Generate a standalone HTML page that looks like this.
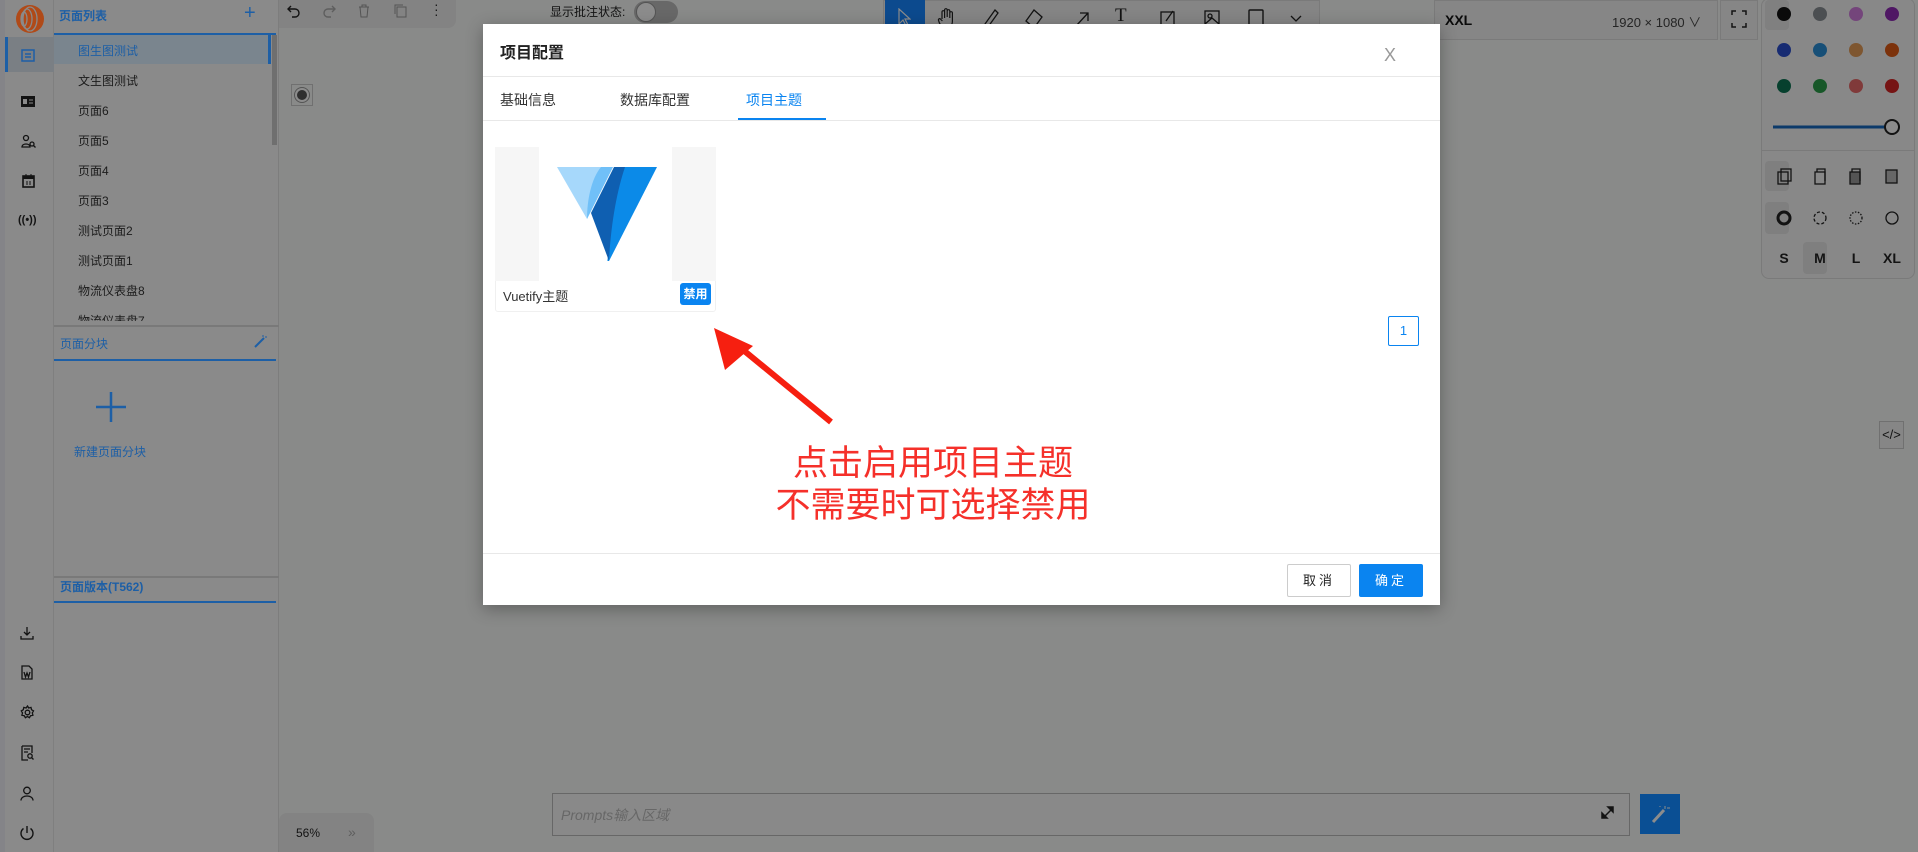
<!DOCTYPE html>
<html><head><meta charset="utf-8"><style>
*{box-sizing:border-box;margin:0;padding:0}
html,body{width:1918px;height:852px}
body{overflow:hidden;position:relative;background:#898a89;font-family:"Liberation Sans","Noto Sans CJK SC",sans-serif;font-size:13px;color:#131313}
.abs{position:absolute}
.ib{position:absolute;left:0;top:0;width:54px;height:852px;background:#8a8a8a;border-right:1px solid #7f7f7f}
.side{position:absolute;left:54px;top:0;width:225px;height:852px;background:#8a8a8a;border-right:1px solid #7d7d7d}
.item{position:absolute;left:24px;font-size:12px;color:#1c1c1c}
.blue{color:#1d5fa6}
.modal{position:absolute;left:483px;top:24px;width:957px;height:581px;background:#fff;box-shadow:0 4px 16px rgba(0,0,0,.3);z-index:6;color:#222}
svg{position:absolute}
</style></head><body>
<div class="ib"></div>
<div class="abs" style="left:0;top:0;width:5px;height:852px;background:#848488"></div>
<svg style="left:14px;top:3px" width="34" height="32" viewBox="0 0 34 32"><circle cx="16" cy="16" r="14" fill="#b04a18"/><g fill="none" stroke="#8a8a8a" stroke-width="1.3"><ellipse cx="10" cy="16" rx="3" ry="7"/><ellipse cx="13" cy="16" rx="5" ry="10"/><ellipse cx="16" cy="16" rx="7" ry="12"/></g></svg>
<div class="abs" style="left:5px;top:37px;width:49px;height:35px;background:#7a7f84;border-left:3px solid #1d5fa6"></div>
<svg style="left:21px;top:49px" width="14" height="13" viewBox="0 0 14 13"><rect x="1" y="1" width="12" height="11" fill="none" stroke="#1d5fa6" stroke-width="1.5"/><path d="M4 5h6M4 8h6" stroke="#1d5fa6" stroke-width="1.4"/></svg>
<svg style="left:21px;top:95px" width="14" height="13"><rect x="0" y="1" width="14" height="11" fill="#131313"/><rect x="2" y="4" width="4" height="5" fill="#8a8a8a"/><path d="M8 5h4M8 8h4" stroke="#8a8a8a"/></svg>
<svg style="left:21px;top:134px" width="15" height="15" fill="none" stroke="#131313" stroke-width="1.3"><circle cx="5" cy="4" r="2.5"/><path d="M1 13c0-4 8-4 8 0z"/><circle cx="11" cy="10" r="2"/><path d="M12.5 11.5l2 2"/></svg>
<svg style="left:22px;top:173px" width="13" height="15"><rect x="1" y="3" width="11" height="11" fill="none" stroke="#131313" stroke-width="1.6"/><rect x="1" y="3" width="11" height="3" fill="#131313"/><path d="M4 1v3M9 1v3M5 8v4M8 8v4" stroke="#131313"/></svg>
<div class="abs" style="left:18px;top:214px;font-size:11px;font-weight:bold;color:#131313">((•))</div>
<svg style="left:20px;top:626px" width="14" height="14" fill="none" stroke="#131313" stroke-width="1.3"><path d="M7 1v8M4 6l3 3 3-3M1 10v3h12v-3"/></svg>
<svg style="left:21px;top:665px" width="12" height="15" fill="none" stroke="#131313" stroke-width="1.3"><path d="M1 1h7l3 3v10H1z"/><path d="M3 7l1.5 5 1.5-4 1.5 4L9 7"/></svg>
<svg style="left:20px;top:705px" width="15" height="15" fill="none" stroke="#131313" stroke-width="1.3"><circle cx="7.5" cy="7.5" r="2.3"/><path d="M7.5 1l1.2 2 2.3-.6.5 2.3 2 1.2-1.2 2 .6 2.3-2.3.5-1.2 2-2-1.2-2 1.2-1.2-2-2.3-.5.6-2.3-1.2-2 2-1.2.5-2.3 2.3.6z"/></svg>
<svg style="left:21px;top:745px" width="13" height="16" fill="none" stroke="#131313" stroke-width="1.3"><path d="M1 1h10v7M1 1v14h6"/><path d="M3 4h6M3 7h4"/><circle cx="9" cy="11" r="2.2"/><path d="M10.5 12.5l2 2"/></svg>
<svg style="left:20px;top:786px" width="14" height="15" fill="none" stroke="#131313" stroke-width="1.3"><circle cx="7" cy="4.5" r="3.3"/><path d="M1 14.5c0-6 12-6 12 0"/></svg>
<svg style="left:19px;top:825px" width="16" height="16" fill="none" stroke="#131313" stroke-width="1.4"><path d="M8 1v7"/><path d="M4.5 3.5a6 6 0 1 0 7 0"/></svg>

<div class="side">
 <div class="abs blue" style="left:5px;top:7px;font-size:12px;font-weight:bold">页面列表</div>
 <div class="abs blue" style="left:190px;top:2px;font-size:20px">+</div>
 <div class="abs" style="left:0;top:33px;width:222px;height:2px;background:#1d5fa6"></div>
 <div class="abs" style="left:0;top:35px;width:217px;height:29px;background:#7a858e;border-right:3px solid #1d5fa6"></div>
 <div class="abs" style="left:218px;top:35px;width:5px;height:110px;background:#6f6f6f"></div>
 <div class="item blue" style="top:42px">图生图测试</div>
 <div class="item" style="top:72px">文生图测试</div>
 <div class="item" style="top:102px">页面6</div>
 <div class="item" style="top:132px">页面5</div>
 <div class="item" style="top:162px">页面4</div>
 <div class="item" style="top:192px">页面3</div>
 <div class="item" style="top:222px">测试页面2</div>
 <div class="item" style="top:252px">测试页面1</div>
 <div class="item" style="top:282px">物流仪表盘8</div>
 <div class="item" style="top:312px;height:9px;overflow:hidden">物流仪表盘7</div>
 <div class="abs" style="left:0;top:325px;width:225px;height:2px;background:#797979"></div>
 <div class="abs blue" style="left:6px;top:335px;font-size:12px">页面分块</div>
 <svg style="left:199px;top:334px" width="14" height="14" stroke="#1d5fa6" stroke-width="2"><path d="M2 13L11 4"/><path d="M10 1v2M12 3h2" stroke-width="1"/></svg>
 <div class="abs" style="left:0;top:359px;width:222px;height:2px;background:#1d5fa6"></div>
 <svg style="left:42px;top:392px" width="30" height="30" stroke="#1d5fa6" stroke-width="2.5"><path d="M15 0v30M0 15h30"/></svg>
 <div class="abs blue" style="left:20px;top:443px;font-size:12px">新建页面分块</div>
 <div class="abs" style="left:0;top:576px;width:225px;height:2px;background:#797979"></div>
 <div class="abs blue" style="left:6px;top:578px;font-size:12px;font-weight:bold">页面版本(T562)</div>
 <div class="abs" style="left:0;top:601px;width:222px;height:2px;background:#1d5fa6"></div>
</div>

<div class="abs" style="left:279px;top:0;width:177px;height:28px;background:#838383;border-radius:0 0 8px 0"></div>
<svg style="left:287px;top:5px" width="14" height="14" fill="none" stroke="#131313" stroke-width="1.4"><path d="M4 1L1 4l3 3"/><path d="M1 4h7a4 4 0 0 1 0 8H5"/></svg>
<svg style="left:322px;top:5px" width="14" height="14" fill="none" stroke="#5e5e5e" stroke-width="1.4"><path d="M10 1l3 3-3 3"/><path d="M13 4H6a4 4 0 0 0 0 8h3"/></svg>
<svg style="left:358px;top:4px" width="12" height="14" fill="none" stroke="#545454"><path d="M1 3h10M4 3V1h4v2M2 3l1 10h6l1-10"/></svg>
<svg style="left:394px;top:4px" width="13" height="14" fill="none" stroke="#545454"><rect x="3" y="3" width="9" height="10"/><path d="M1 10V1h8"/></svg>
<div class="abs" style="left:434px;top:2px;font-size:14px;color:#1c1c1c;line-height:5px">·<br>·<br>·</div>
<div class="abs" style="left:550px;top:3px;font-size:12px;color:#131313">显示批注状态:</div>
<div class="abs" style="left:634px;top:1px;width:44px;height:22px;border-radius:11px;background:#686868"></div>
<div class="abs" style="left:636px;top:2px;width:20px;height:20px;border-radius:10px;background:#8c8c8c;border:1px solid #545454"></div>
<div class="abs" style="left:291px;top:84px;width:22px;height:22px;border:1px solid #707070"></div>
<div class="abs" style="left:297px;top:90px;width:10px;height:10px;border-radius:5px;background:#2f2f2f;box-shadow:0 0 0 2px #8c8c8c,0 0 0 3px #545454"></div>

<div class="abs" style="left:883px;top:0;width:437px;height:40px;background:#858585;border:1px solid #7a7a7a"></div>
<div class="abs" style="left:885px;top:0;width:40px;height:38px;background:#0c4a8e;border-radius:0 0 4px 4px"></div>
<svg style="left:897px;top:8px" width="14" height="20" fill="none" stroke="#8c8c8c" stroke-width="1.2"><path d="M2 1v15l4-4 3 6 2-1-3-6h5z"/></svg>
<svg style="left:937px;top:8px" width="20" height="22" fill="none" stroke="#131313" stroke-width="1.2"><path d="M5 11V4a1.3 1.3 0 0 1 2.6 0v6M7.6 9V2a1.3 1.3 0 0 1 2.6 0v7M10.2 9V3a1.3 1.3 0 0 1 2.6 0v7M12.8 10V5a1.3 1.3 0 0 1 2.6 0v8c0 4-2 7-6 7s-5-2-7-5l-1-3a1.2 1.2 0 0 1 2-1l2 2"/></svg>
<svg style="left:983px;top:9px" width="16" height="20" fill="none" stroke="#131313" stroke-width="1.3"><path d="M12 1l3 3L5 18l-4 1 1-4z"/></svg>
<svg style="left:1025px;top:9px" width="18" height="20" fill="none" stroke="#131313" stroke-width="1.3"><path d="M9 1l8 7-8 11-8-7z"/></svg>
<svg style="left:1074px;top:11px" width="16" height="16" fill="none" stroke="#131313" stroke-width="1.3"><path d="M2 15L14 2M6 2h8v8"/></svg>
<div class="abs" style="left:1115px;top:5px;font-size:19px;color:#131313;font-family:'Liberation Serif'">T</div>
<svg style="left:1160px;top:9px" width="16" height="18" fill="none" stroke="#131313" stroke-width="1.3"><rect x="1" y="3" width="13" height="14"/><path d="M6 12l7-10"/></svg>
<svg style="left:1204px;top:9px" width="16" height="18" fill="none" stroke="#131313" stroke-width="1.3"><rect x="1" y="2" width="14" height="15"/><circle cx="6" cy="7" r="2"/><path d="M1 15l7-6 7 6"/></svg>
<svg style="left:1248px;top:9px" width="16" height="18" fill="none" stroke="#131313" stroke-width="1.4"><rect x="1" y="1" width="14" height="16" rx="1"/></svg>
<svg style="left:1290px;top:15px" width="12" height="8" fill="none" stroke="#131313" stroke-width="1.3"><path d="M1 1l5 5 5-5"/></svg>

<div class="abs" style="left:1434px;top:0;width:284px;height:40px;background:#868686;border:1px solid #7a7a7a"></div>
<div class="abs" style="left:1445px;top:12px;font-size:14px;font-weight:bold;color:#0a0a0a">XXL</div>
<div class="abs" style="left:1612px;top:12px;font-size:13px;color:#252525">1920 × 1080 ∨</div>
<div class="abs" style="left:1720px;top:0;width:38px;height:40px;background:#868686;border:1px solid #7a7a7a"></div>
<svg style="left:1731px;top:10px" width="16" height="18" fill="none" stroke="#131313" stroke-width="1.5"><path d="M1 5V1h4M11 1h4v4M1 13v4h4M11 17h4v-4"/></svg>

<div class="abs" style="left:1761px;top:-2px;width:154px;height:281px;background:#888;border:1px solid #7a7a7a;border-radius:8px"></div>
<div class="abs" style="left:1765px;top:0;width:24px;height:30px;background:#808080;border-radius:4px"></div>
<div class="abs" style="left:1765px;top:161px;width:24px;height:30px;background:#7f7f7f;border-radius:4px"></div>
<div class="abs" style="left:1765px;top:202px;width:24px;height:32px;background:#7f7f7f;border-radius:4px"></div>
<div class="abs" style="left:1803px;top:242px;width:24px;height:32px;background:#7f7f7f;border-radius:4px"></div>
<div class="abs" style="left:1761px;top:150px;width:154px;height:1px;background:#7a7a7a"></div>
<svg style="left:1761px;top:0" width="154" height="279">
 <g><circle cx="23" cy="14" r="7" fill="#0a0a0a"/><circle cx="59" cy="14" r="7" fill="#4c4f52"/><circle cx="95" cy="14" r="7" fill="#74457b"/><circle cx="131" cy="14" r="7" fill="#4f1764"/>
 <circle cx="23" cy="50" r="7" fill="#172b72"/><circle cx="59" cy="50" r="7" fill="#174f77"/><circle cx="95" cy="50" r="7" fill="#7e5630"/><circle cx="131" cy="50" r="7" fill="#7c320b"/>
 <circle cx="23" cy="86" r="7" fill="#06402e"/><circle cx="59" cy="86" r="7" fill="#175728"/><circle cx="95" cy="86" r="7" fill="#803a3a"/><circle cx="131" cy="86" r="7" fill="#761414"/></g>
 <path d="M12 127H125" stroke="#0c3a6a" stroke-width="3"/><circle cx="131" cy="127" r="7" fill="#8c8c8c" stroke="#131313" stroke-width="2"/>
 <g fill="none" stroke="#131313" stroke-width="1.3"><rect x="17" y="172" width="10" height="12"/><rect x="20" y="169" width="10" height="12"/><rect x="54" y="172" width="10" height="12"/><path d="M56 172v-3h8v12"/><rect x="89" y="172" width="10" height="12" fill="#545454"/><path d="M91 172v-3h8v12"/><rect x="125" y="170" width="11" height="13" fill="#676767"/>
 <circle cx="23" cy="218" r="6" stroke-width="3"/><circle cx="59" cy="218" r="6" stroke-dasharray="3 2"/><circle cx="95" cy="218" r="6" stroke-dasharray="1.5 1.5"/><circle cx="131" cy="218" r="6"/></g>
 <g font-size="14" font-weight="bold" fill="#131313" font-family="Liberation Sans" text-anchor="middle"><text x="23" y="263">S</text><text x="59" y="263">M</text><text x="95" y="263">L</text><text x="131" y="263">XL</text></g>
</svg>

<div class="abs" style="left:1879px;top:421px;width:25px;height:28px;border:1px solid #707070;background:#868686;font-size:13px;text-align:center;line-height:26px;color:#131313">&lt;/&gt;</div>

<div class="abs" style="left:279px;top:813px;width:95px;height:39px;background:#838383;border-radius:8px 8px 0 0"></div>
<div class="abs" style="left:296px;top:826px;font-size:12px;color:#131313">56%</div>
<div class="abs" style="left:348px;top:824px;font-size:14px;color:#5e5e5e">»</div>
<div class="abs" style="left:552px;top:793px;width:1078px;height:43px;border:1px solid #676767;background:#898989"></div>
<div class="abs" style="left:561px;top:805px;font-size:14px;font-style:italic;color:#676767">Prompts输入区域</div>
<svg style="left:1600px;top:805px" width="16" height="16" stroke="#131313" stroke-width="1.5" fill="#131313"><path d="M3 13L13 3"/><path d="M13 2v5l-5-5zM2 13V8l5 5z"/></svg>
<div class="abs" style="left:1640px;top:794px;width:40px;height:40px;background:#0a4f94"></div>
<svg style="left:1650px;top:804px" width="20" height="20" stroke="#8c8c8c" stroke-width="3"><path d="M3 18L14 6"/><path d="M15 2v3M17 4h3M10 2v1" stroke-width="1"/></svg>

<div class="modal">
 <div class="abs" style="left:17px;top:15px;font-size:16px;font-weight:bold;color:#222">项目配置</div>
 <div class="abs" style="left:901px;top:21px;font-size:18px;color:#999">X</div>
 <div class="abs" style="left:0;top:52px;width:957px;height:1px;background:#e8e8e8"></div>
 <div class="abs" style="left:17px;top:66px;font-size:14px;color:#333">基础信息</div>
 <div class="abs" style="left:137px;top:66px;font-size:14px;color:#333">数据库配置</div>
 <div class="abs" style="left:263px;top:66px;font-size:14px;color:#0a84f0">项目主题</div>
 <div class="abs" style="left:255px;top:94px;width:88px;height:2px;background:#0a84f0"></div>
 <div class="abs" style="left:0;top:96px;width:957px;height:1px;background:#e8e8e8"></div>
 <div class="abs" style="left:12px;top:123px;width:221px;height:165px;border:1px solid #f0f0f0;border-radius:3px"></div>
 <div class="abs" style="left:12px;top:123px;width:221px;height:134px;background:#f6f6f6"></div>
 <div class="abs" style="left:56px;top:123px;width:133px;height:134px;background:#fff"></div>
 <svg style="left:74px;top:137px" width="100" height="100" viewBox="0 0 100 100">
  <path d="M0 6H56L30 58z" fill="#a6d8fb"/>
  <path d="M30 58L56 6H44C34 18 30 40 30 58z" fill="#70c0f8"/>
  <path d="M60 6H100L50 104z" fill="#0b8ae8"/>
  <path d="M57 6H68C60 30 54 62 52 100L34 52z" fill="#0f5fb1"/>
 </svg>
 <div class="abs" style="left:20px;top:262px;font-size:13px;color:#333">Vuetify主题</div>
 <div class="abs" style="left:197px;top:259px;width:31px;height:22px;background:#0a84f0;border-radius:3px;color:#fff;font-size:12px;text-align:center;line-height:22px;font-weight:bold">禁用</div>
 <div class="abs" style="left:905px;top:292px;width:31px;height:30px;border:1px solid #0a84f0;border-radius:2px;color:#0a84f0;font-size:13px;text-align:center;line-height:28px">1</div>
 <svg style="left:220px;top:300px" width="140" height="110"><path d="M128 98L28 16" stroke="#f61f10" stroke-width="6"/><path d="M11 4L50 22L22 46z" fill="#f61f10"/></svg>
 <div class="abs" style="left:280px;top:419px;width:340px;text-align:center;font-size:35px;line-height:42px;color:#f5302a">点击启用项目主题<br>不需要时可选择禁用</div>
 <div class="abs" style="left:0;top:529px;width:957px;height:1px;background:#e8e8e8"></div>
 <div class="abs" style="left:804px;top:540px;width:64px;height:33px;border:1px solid #ccc;border-radius:2px;font-size:13px;text-align:center;line-height:31px;color:#222;letter-spacing:3px">取消</div>
 <div class="abs" style="left:876px;top:540px;width:64px;height:33px;background:#0a84f0;border-radius:2px;font-size:13px;text-align:center;line-height:33px;color:#fff;letter-spacing:3px">确定</div>
</div>
</body></html>
